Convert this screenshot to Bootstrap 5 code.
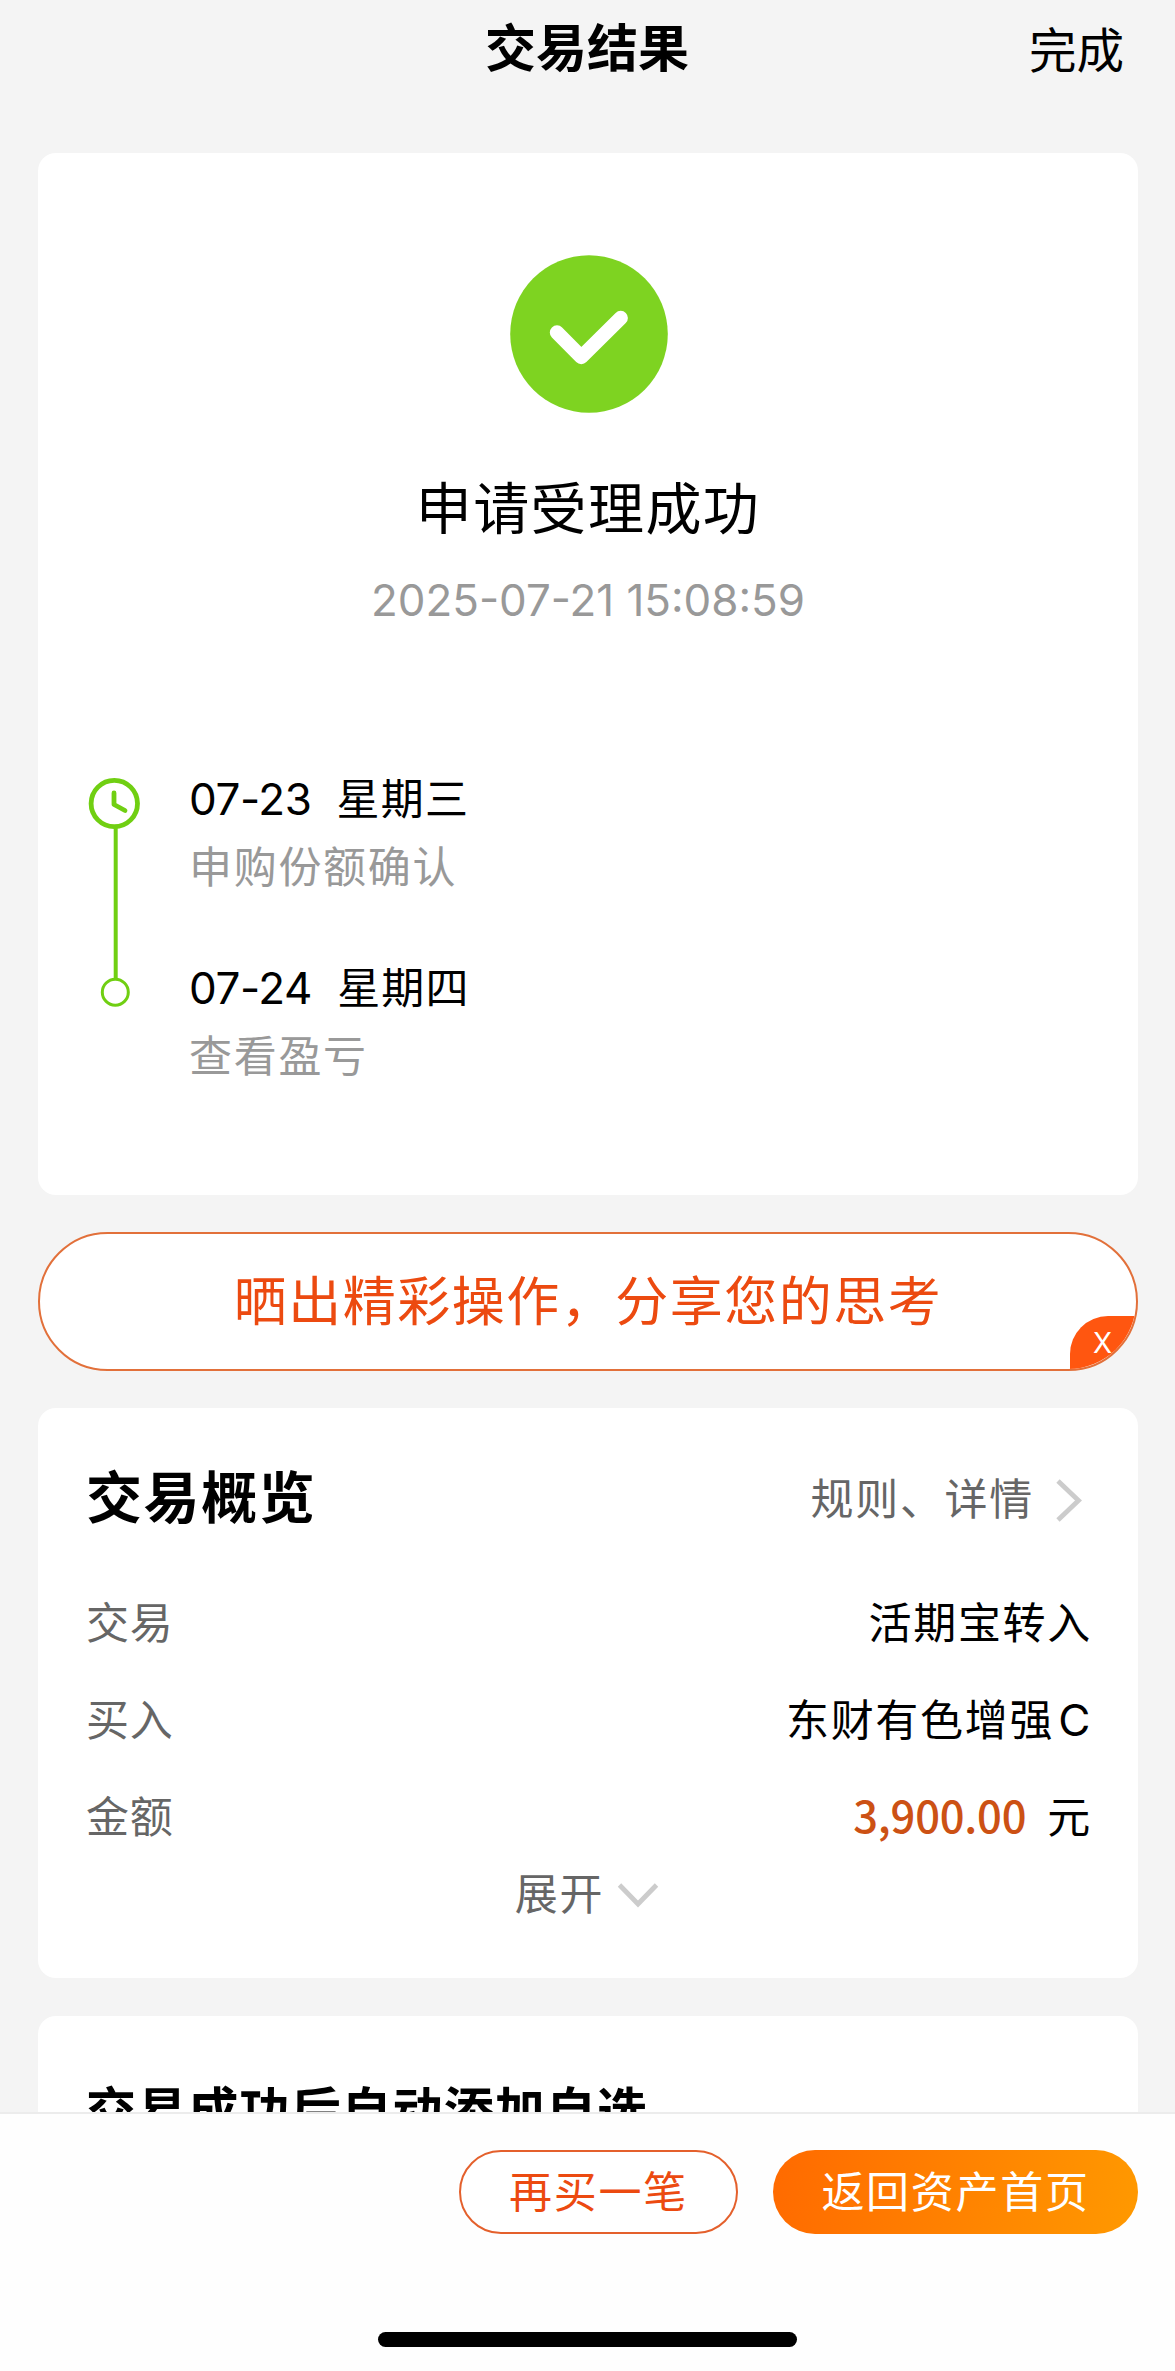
<!DOCTYPE html>
<html lang="zh-CN">
<head>
<meta charset="utf-8">
<meta name="viewport" content="width=device-width, initial-scale=1">
<title>交易结果</title>
<link href="https://cdn.jsdelivr.net/npm/bootstrap@5.3.0/dist/css/bootstrap.min.css" rel="stylesheet">
<style>
  body { font-family: "Noto Sans CJK SC", sans-serif; font-size: 43px; letter-spacing: 1.7px; color: #000; background: #f4f4f4; }
  .latin { font-family: Inter, "Noto Sans CJK SC", sans-serif; font-size: 44px; line-height: 1; }
  .screen-body { padding: 0 37px 0 38px; }
  .topbar { height: 153px; }
  .topbar > * { flex: 1 1 0; }
  .topbar-title { font-size: 51px; line-height: 90px; letter-spacing: 0; padding-right: 2px !important; }
  .topbar-done { font-size: 47.5px; line-height: 95px; letter-spacing: 0; }
  .topbar-done span { padding-right: 14px; }
  .panel { border: 0; border-radius: 18px; flex-shrink: 0; color: #000; }
  .panel-result { height: 1042px; padding: 102px 50px 0; }
  .result-icon { padding-left: 1px; }
  .result-title { font-size: 56px; line-height: 80px; margin-top: 52px; letter-spacing: 1.4px; }
  .result-time { font-size: 43.9px; line-height: 60px; margin-top: 25px; letter-spacing: 0; color: #999; }
  .steps { gap: 49px; margin-top: 132px; }
  .steps-track { margin-top: 15px; }
  .steps-list { gap: 53px; line-height: 68px; }
  .step-date { margin-right: 25px; letter-spacing: -.4px; }
  .step-day { letter-spacing: 1.2px; }
  .tone-soft { color: #999; }
  .tone-mid { color: #666; }
  .share-pill { height: 139px; margin: 37px 0; padding-bottom: 5px; border: 2px solid #e2703a; border-radius: 70px; background: #fff; overflow: hidden; flex-shrink: 0; font-size: 53px; letter-spacing: 1.5px; color: #ec4a10; }
  .share-close { right: -2px; bottom: -2px; width: 68px; height: 55px; border-radius: 38px 0 0 0; background: #ff5610; color: #fff; font-family: Inter, sans-serif; font-size: 28px; letter-spacing: 0; line-height: 55px; padding-right: 3px; }
  .panel-overview { height: 570px; padding: 46px 46px 0 48px; }
  .overview-title { font-size: 56px; line-height: 80px; letter-spacing: 1.6px; }
  .overview-more { line-height: 84px; gap: 21px; padding-right: 9px; }
  .overview-more svg { margin-top: 8px; }
  .overview-rows { margin-top: 34px; line-height: 96.8px; }
  .row-name { letter-spacing: .8px; }
  .amount { font-size: 43.5px; font-weight: 500; letter-spacing: -.2px; color: #cc5114; margin-right: 21px; }
  .expand { line-height: 56px; gap: 13px; padding-right: 4px; }
  .expand svg { margin-top: 8px; }
  .panel-watch { margin-top: 38px; padding: 51px 48px 0; font-size: 50px; line-height: 80px; height: 300px; letter-spacing: 1.1px; }
  .bottombar { height: 259px; background: #fefefe; border-top: 2px solid #ececec; padding: 36px 37px 0; }
  .pill-btn { height: 84px; border-radius: 42px; font-size: 43px; line-height: 72px; padding: 0 0 6px; letter-spacing: 1.7px; }
  .pill-again { width: 279px; border: 2px solid #e4602c; color: #ec4a10; background: #fff; }
  .pill-home { width: 365px; border: 0; color: #fff; background: linear-gradient(100deg, #ff6a00, #ff9900); }
  .pill-pair { gap: 35px; }
  .home-indicator { width: 419px; height: 15px; border-radius: 8px; background: #000; margin-top: 98px; }
</style>
</head>
<body class="vh-100 d-flex flex-column overflow-hidden">
<main class="screen-body d-flex flex-column flex-fill overflow-hidden">
  <header class="topbar d-flex align-items-start flex-shrink-0">
    <span></span>
    <h1 class="topbar-title fw-bold text-center m-0">交易结果</h1>
    <a class="topbar-done text-end text-reset text-decoration-none" href="#"><span>完成</span></a>
  </header>

  <section class="panel panel-result card">
    <div class="text-center">
      <div class="result-icon">
        <svg class="d-block mx-auto" width="158" height="158" viewBox="0 0 158 158" aria-hidden="true">
          <circle cx="79" cy="79" r="78.8" fill="#7ed321"/>
          <path d="M47 77.5 71.3 102 110.7 63" fill="none" stroke="#fff" stroke-width="14.4" stroke-linecap="round" stroke-linejoin="round"/>
        </svg>
      </div>
      <h2 class="result-title fw-normal mb-0">申请受理成功</h2>
      <p class="result-time latin mb-0">2025-07-21 15:08:59</p>
    </div>
    <div class="steps d-flex align-items-start">
      <svg class="steps-track flex-shrink-0" width="52" height="232" viewBox="0 0 52 232" fill="none" stroke="#70cf12" aria-hidden="true">
        <circle cx="26.3" cy="26.5" r="23.2" stroke-width="4.8"/>
        <path d="M26 16v11.5l11 6" stroke-width="4.8" stroke-linecap="round" stroke-linejoin="round"/>
        <path d="M27.7 51v150" stroke-width="4"/>
        <circle cx="27.3" cy="215.2" r="13" stroke-width="3"/>
      </svg>
      <div class="steps-list d-flex flex-column">
        <div>
          <div><span class="step-date latin">07-23</span><span class="step-day">星期三</span></div>
          <div class="tone-soft">申购份额确认</div>
        </div>
        <div>
          <div><span class="step-date latin">07-24</span><span class="step-day">星期四</span></div>
          <div class="tone-soft">查看盈亏</div>
        </div>
      </div>
    </div>
  </section>

  <div class="share-pill position-relative d-flex align-items-center justify-content-center">
    <span>晒出精彩操作，分享您的思考</span>
    <span class="share-close position-absolute text-center">X</span>
  </div>

  <section class="panel panel-overview card">
    <div class="d-flex justify-content-between">
      <h2 class="overview-title fw-bold m-0">交易概览</h2>
      <a class="overview-more tone-mid d-flex align-items-center text-decoration-none" href="#">规则、详情
        <svg width="28" height="44" viewBox="0 0 28 44" fill="none" stroke="#ccc" stroke-width="4.8" aria-hidden="true"><path d="M3 3 23.5 22.5 3 42"/></svg>
      </a>
    </div>
    <div class="overview-rows">
      <div class="d-flex justify-content-between"><span class="row-name tone-mid">交易</span><span>活期宝转入</span></div>
      <div class="d-flex justify-content-between"><span class="row-name tone-mid">买入</span><span>东财有色增强<span class="latin ms-1">C</span></span></div>
      <div class="d-flex justify-content-between"><span class="row-name tone-mid">金额</span><span><span class="amount">3,900.00</span>元</span></div>
    </div>
    <a class="expand tone-mid d-flex align-items-center justify-content-center text-decoration-none" href="#">展开
      <svg width="42" height="26" viewBox="0 0 42 26" fill="none" stroke="#ccc" stroke-width="4.8" aria-hidden="true"><path d="M2.5 3 21 22 39.5 3"/></svg>
    </a>
  </section>

  <section class="panel panel-watch card fw-bold">交易成功后自动添加自选</section>
</main>

<footer class="bottombar flex-shrink-0">
  <div class="pill-pair d-flex justify-content-end">
    <button class="pill-btn pill-again btn" type="button">再买一笔</button>
    <button class="pill-btn pill-home btn" type="button">返回资产首页</button>
  </div>
  <div class="home-indicator mx-auto"></div>
</footer>
<script src="https://cdn.jsdelivr.net/npm/bootstrap@5.3.0/dist/js/bootstrap.bundle.min.js"></script>
</body>
</html>
